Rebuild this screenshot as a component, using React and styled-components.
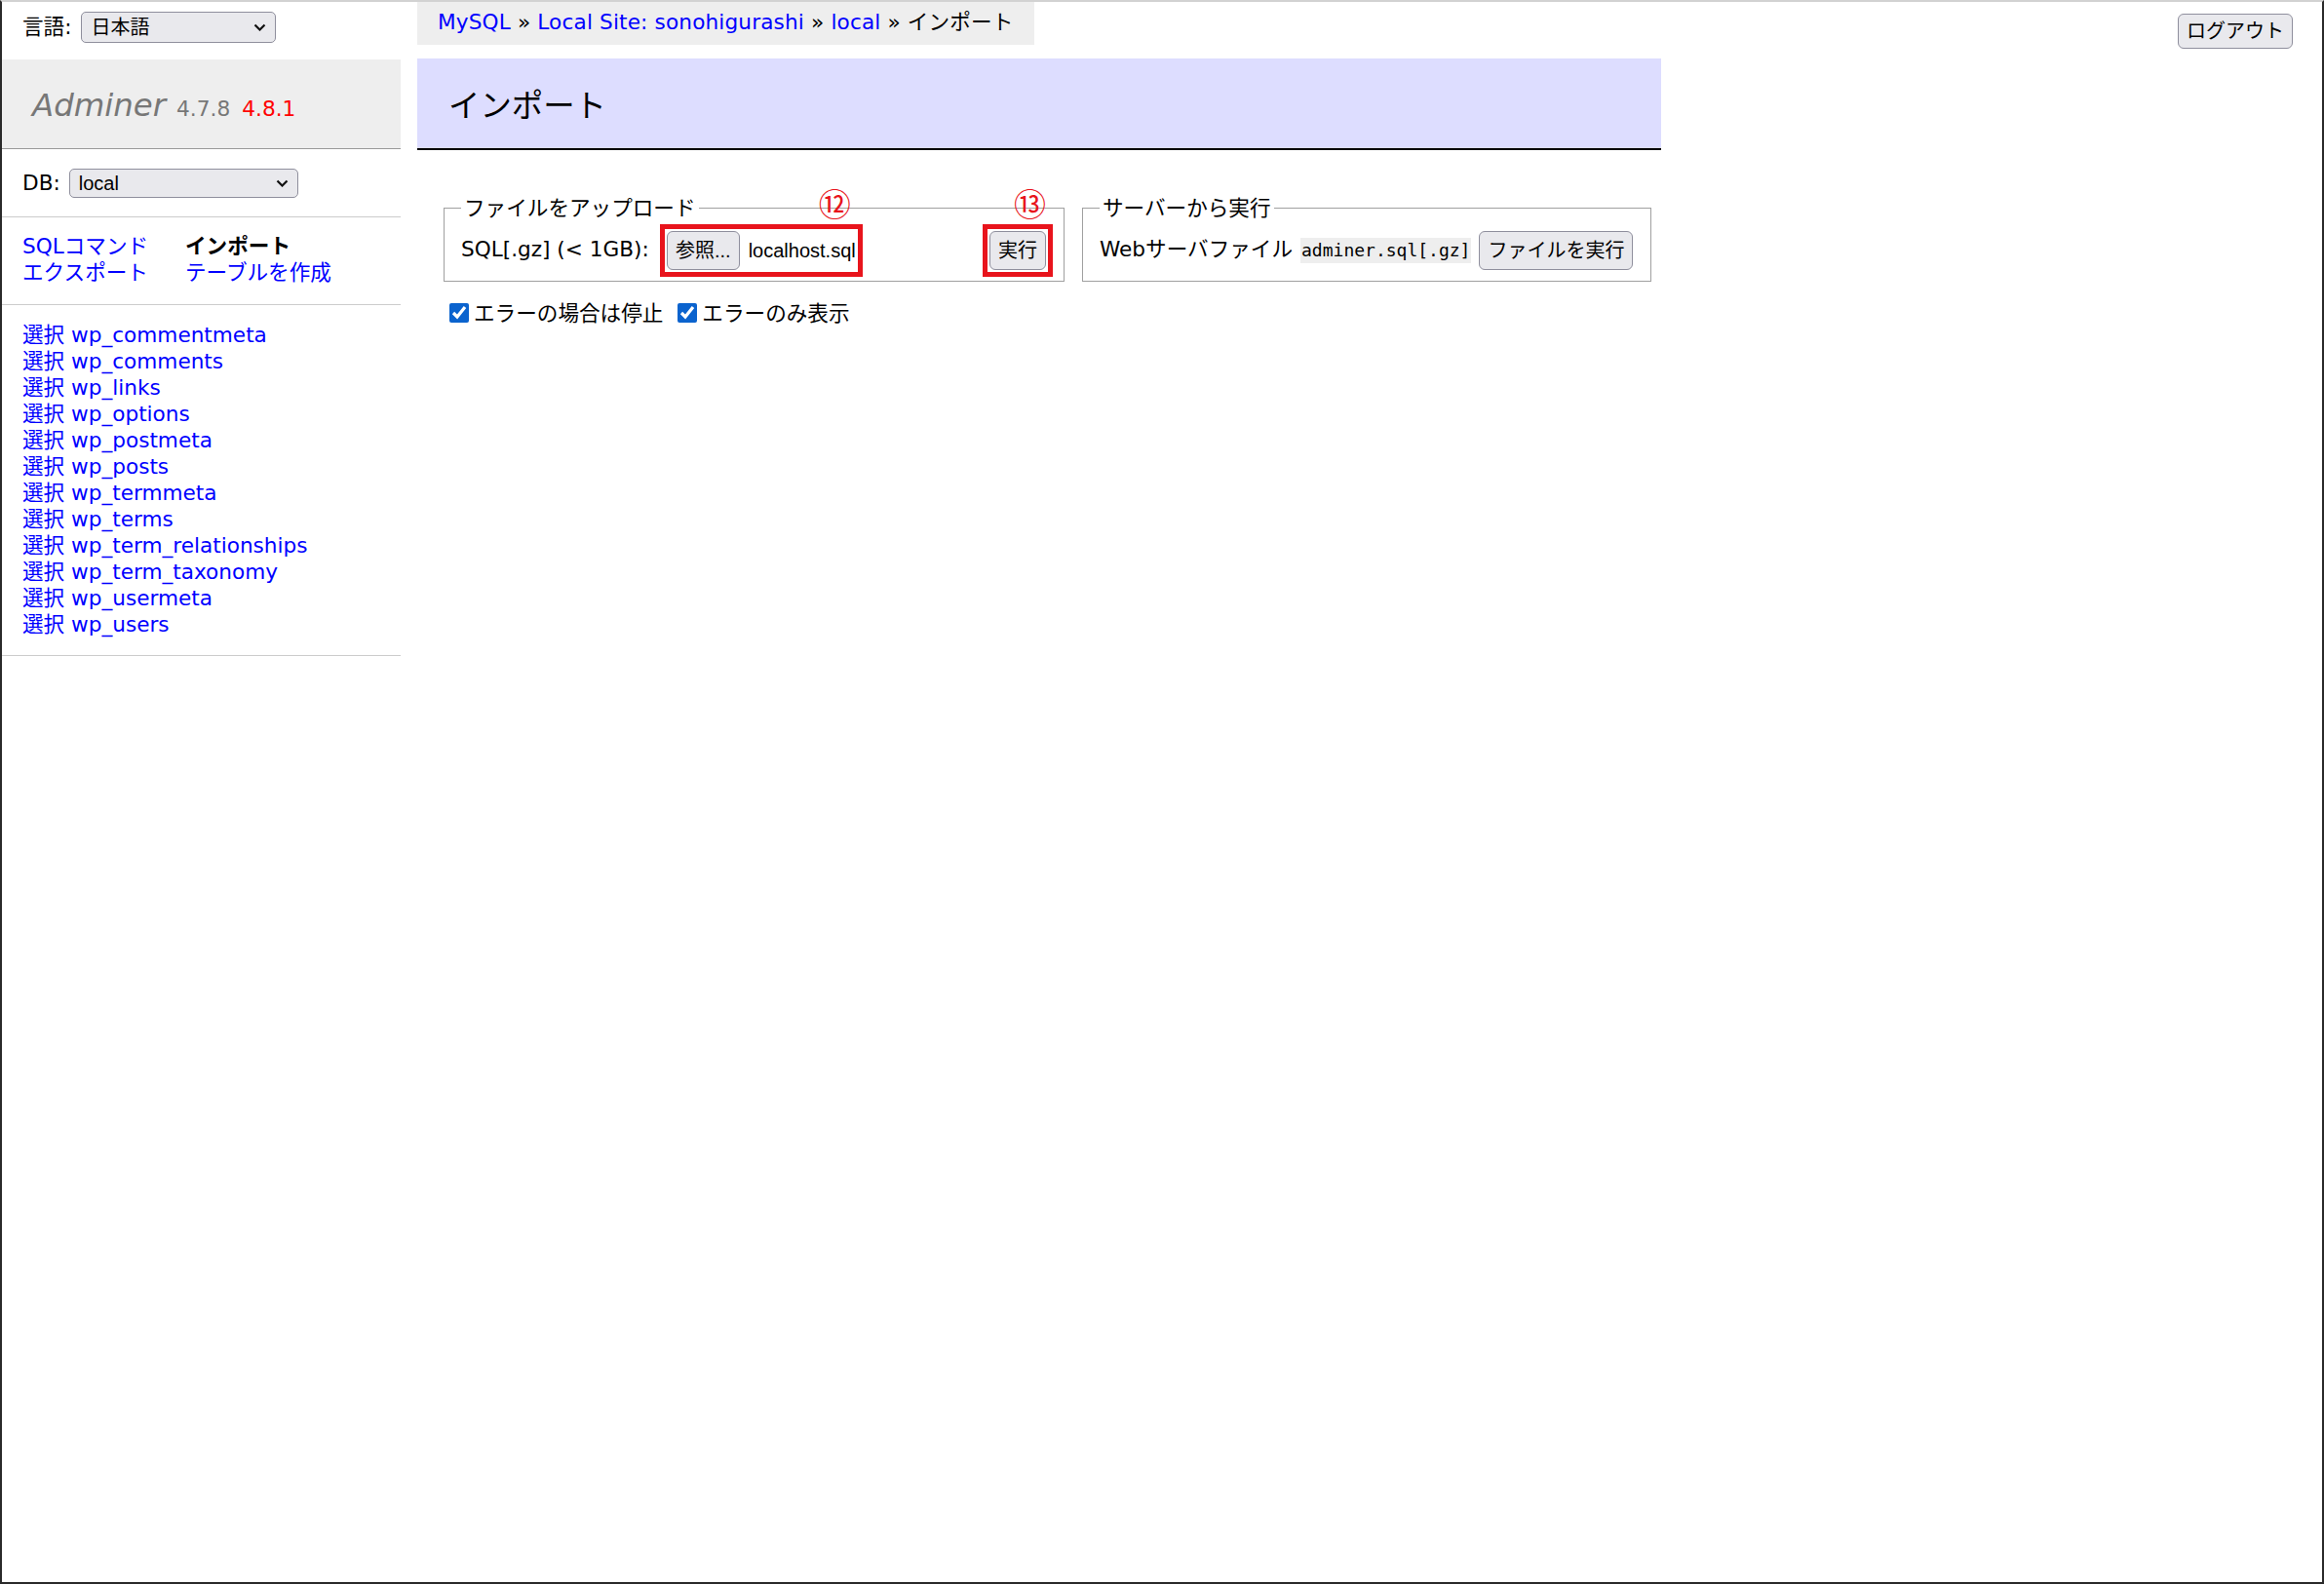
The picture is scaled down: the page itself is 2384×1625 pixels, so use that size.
import React from "react";
import styled, { createGlobalStyle } from "styled-components";

const GlobalStyle = createGlobalStyle`
  html, body { margin: 0; padding: 0; background: #fff; }
  body {
    font: 21.6px/1.25 "DejaVu Sans", "Noto Sans CJK JP", sans-serif;
    color: #000;
  }
  * { box-sizing: border-box; }
`;

const Frame = styled.div`
  width: 2384px;
  height: 1625px;
  border: 2px solid #2a2a2a;
  border-top: 2px solid #d2d2d2;
  display: flex;
  align-items: flex-start;
  overflow: hidden;
`;

/* ---------- sidebar ---------- */
const Sidebar = styled.aside`
  width: 409px;
  flex: none;
  display: flex;
  flex-direction: column;
`;

const LangRow = styled.form`
  height: 59px;
  margin: 0;
  padding: 10px 0 0 21px;
  display: flex;
  align-items: flex-start;
  gap: 10px;
`;

const FieldLabel = styled.span`
  line-height: ${(p) => p.$h}px;
  white-space: nowrap;
`;

const SelectBox = styled.span`
  position: relative;
  display: inline-flex;
  align-items: center;
  width: ${(p) => p.$w}px;
  height: ${(p) => p.$h}px;
  background: #e9e9ed;
  border: 1px solid #8f8f9d;
  border-radius: 5px;
  padding-left: 9px;
  font: 20px/1 "Liberation Sans", "Noto Sans CJK JP", sans-serif;
  color: #000;
`;

const Chevron = styled.svg`
  position: absolute;
  right: 9px;
  top: 50%;
  margin-top: -4px;
`;

const Brand = styled.div`
  height: 92px;
  background: #eee;
  border-bottom: 1px solid #999;
  padding: 27px 31px 0;
  line-height: 40.5px;
  white-space: nowrap;
`;

const BrandName = styled.span`
  font-size: 32.4px;
  font-style: italic;
  color: #777;
`;

const Version = styled.span`
  font-size: 21.7px;
  margin-left: ${(p) => p.$ml}px;
  color: ${(p) => (p.$new ? "#f00" : "#777")};
`;

const DbRow = styled.div`
  height: 70px;
  border-bottom: 1px solid #ccc;
  padding: 0 21px;
  display: flex;
  align-items: center;
  gap: 9px;
`;

const Links = styled.div`
  border-bottom: 1px solid #ccc;
  padding: 16px 21px 19px;
  display: grid;
  grid-template-columns: 167px auto;
  line-height: 27px;
`;

const NavLink = styled.a`
  color: ${(p) => (p.$active ? "#000" : "#00f")};
  font-weight: ${(p) => (p.$active ? "bold" : "normal")};
  text-decoration: none;
  white-space: nowrap;
`;

const Tables = styled.div`
  border-bottom: 1px solid #ccc;
  padding: 17px 21px 18px;
  display: flex;
  flex-direction: column;
  line-height: 27px;
`;

const TableLink = styled.a`
  color: #00f;
  text-decoration: none;
  white-space: nowrap;
`;

/* ---------- main ---------- */
const Main = styled.main`
  flex: 1;
  margin-left: 17px;
  display: flex;
  flex-direction: column;
  align-items: flex-start;
`;

const TopRow = styled.div`
  align-self: stretch;
  height: 44px;
  display: flex;
  justify-content: space-between;
  align-items: flex-start;
`;

const Breadcrumb = styled.nav`
  height: 44px;
  background: #eee;
  padding: 0 21px;
  line-height: 42px;
  letter-spacing: 0.15px;
  white-space: nowrap;
`;

const CrumbLink = styled.a`
  color: #00f;
  text-decoration: none;
`;

const Button = styled.button`
  height: ${(p) => p.$h || 40}px;
  padding: 0 8px;
  background: #e9e9ed;
  border: 1px solid #8f8f9d;
  border-radius: 6px;
  font: 20px/1 "Liberation Sans", "Noto Sans CJK JP", sans-serif;
  color: #000;
  white-space: nowrap;
  flex: none;
  margin: ${(p) => p.$m || "0"};
`;

const Title = styled.h2`
  width: 1276px;
  margin: 14px 0 0;
  padding: 29px 32px 22px;
  background: #ddf;
  border-bottom: 2px solid #000;
  font-size: 32.4px;
  line-height: 40.5px;
  font-weight: normal;
  color: #000;
`;

const FormArea = styled.div`
  margin-top: 46px;
  padding-left: 27px;
  display: flex;
  flex-direction: column;
`;

const FieldsetRow = styled.div`
  display: flex;
  gap: 18px;
  align-items: flex-start;
`;

const Fieldset = styled.fieldset`
  width: ${(p) => p.$w}px;
  margin: 0;
  min-width: 0;
  border: 1px solid #a0a0a0;
  padding: 10px ${(p) => p.$pr || 18}px 11px 17px;
`;

const Legend = styled.legend`
  padding: 0 3px;
  line-height: 27px;
`;

const FieldBody = styled.div`
  display: flex;
  align-items: center;
  height: 40px;
  white-space: nowrap;
`;

const FieldText = styled.span`
  flex: none;
  width: ${(p) => (p.$w ? `${p.$w}px` : "auto")};
`;

const FileInput = styled.span`
  flex: 1;
  display: flex;
  align-items: center;
`;

const FileName = styled.span`
  margin-left: 9px;
  font: 20px/1 "Liberation Sans", "Noto Sans CJK JP", sans-serif;
`;

const Highlight = styled.span`
  position: relative;
  display: inline-flex;
  align-items: center;
  flex: none;
`;

const HighlightFrame = styled.span`
  position: absolute;
  inset: -7px;
  border: 5px solid #e8141c;
  pointer-events: none;
`;

const Badge = styled.span`
  position: absolute;
  right: ${(p) => p.$r}px;
  bottom: calc(100% + 12px);
  font: 33px/1 "Noto Sans CJK JP", sans-serif;
  color: #e8141c;
`;

const Code = styled.code`
  font: 18px/26px "DejaVu Sans Mono", "Liberation Mono", monospace;
  background: #eee;
  padding: 0 1px;
  margin: 0 8px 0 8px;
`;

const CheckRow = styled.p`
  margin: 19px 0 0;
  display: flex;
  align-items: center;
  line-height: 27px;
  white-space: nowrap;
`;

const CheckLabel = styled.label`
  display: inline-flex;
  align-items: center;
  margin-right: 9px;
`;

const Checkbox = styled.input`
  width: 20px;
  height: 20px;
  margin: 0 5px 0 6px;
  accent-color: #0b63ce;
`;

const ChevronIcon = () => (
  <Chevron width="13" height="8" viewBox="0 0 13 8">
    <path d="M1.5 1.5 L6.5 6.5 L11.5 1.5" fill="none" stroke="#111" strokeWidth="2.2" />
  </Chevron>
);

const tables = [
  "wp_commentmeta",
  "wp_comments",
  "wp_links",
  "wp_options",
  "wp_postmeta",
  "wp_posts",
  "wp_termmeta",
  "wp_terms",
  "wp_term_relationships",
  "wp_term_taxonomy",
  "wp_usermeta",
  "wp_users",
];

export default function App() {
  return (
    <>
      <GlobalStyle />
      <Frame>
        <Sidebar>
          <LangRow>
            <FieldLabel $h={32}>言語:</FieldLabel>
            <SelectBox $w={200} $h={32}>
              日本語
              <ChevronIcon />
            </SelectBox>
          </LangRow>
          <Brand>
            <BrandName>Adminer</BrandName>
            <Version $ml={11}>4.7.8</Version>
            <Version $ml={12} $new>
              4.8.1
            </Version>
          </Brand>
          <DbRow>
            <FieldLabel $h={30}>DB:</FieldLabel>
            <SelectBox $w={235} $h={30}>
              local
              <ChevronIcon />
            </SelectBox>
          </DbRow>
          <Links>
            <NavLink href="#">SQLコマンド</NavLink>
            <NavLink href="#" $active>
              インポート
            </NavLink>
            <NavLink href="#">エクスポート</NavLink>
            <NavLink href="#">テーブルを作成</NavLink>
          </Links>
          <Tables>
            {tables.map((t) => (
              <TableLink href="#" key={t}>
                選択 {t}
              </TableLink>
            ))}
          </Tables>
        </Sidebar>

        <Main>
          <TopRow>
            <Breadcrumb>
              <CrumbLink href="#">MySQL</CrumbLink> »{" "}
              <CrumbLink href="#">Local Site: sonohigurashi</CrumbLink> »{" "}
              <CrumbLink href="#">local</CrumbLink> » インポート
            </Breadcrumb>
            <Button $h={36} $m="12px 30px 0 0">
              ログアウト
            </Button>
          </TopRow>

          <Title>インポート</Title>

          <FormArea>
            <FieldsetRow>
              <Fieldset $w={637}>
                <Legend>ファイルをアップロード</Legend>
                <FieldBody>
                  <FieldText $w={211}>SQL[.gz] (&lt; 1GB):</FieldText>
                  <FileInput>
                    <Highlight>
                      <Button>参照...</Button>
                      <FileName>localhost.sql</FileName>
                      <HighlightFrame />
                      <Badge $r={5}>⑫</Badge>
                    </Highlight>
                  </FileInput>
                  <Highlight>
                    <Button>実行</Button>
                    <HighlightFrame />
                    <Badge $r={0}>⑬</Badge>
                  </Highlight>
                </FieldBody>
              </Fieldset>
              <Fieldset $w={584} $pr={19}>
                <Legend>サーバーから実行</Legend>
                <FieldBody>
                  <FieldText>Webサーバファイル</FieldText>
                  <Code>adminer.sql[.gz]</Code>
                  <Button>ファイルを実行</Button>
                </FieldBody>
              </Fieldset>
            </FieldsetRow>
            <CheckRow>
              <CheckLabel>
                <Checkbox type="checkbox" defaultChecked />
                エラーの場合は停止
              </CheckLabel>
              <CheckLabel>
                <Checkbox type="checkbox" defaultChecked />
                エラーのみ表示
              </CheckLabel>
            </CheckRow>
          </FormArea>
        </Main>
      </Frame>
    </>
  );
}
